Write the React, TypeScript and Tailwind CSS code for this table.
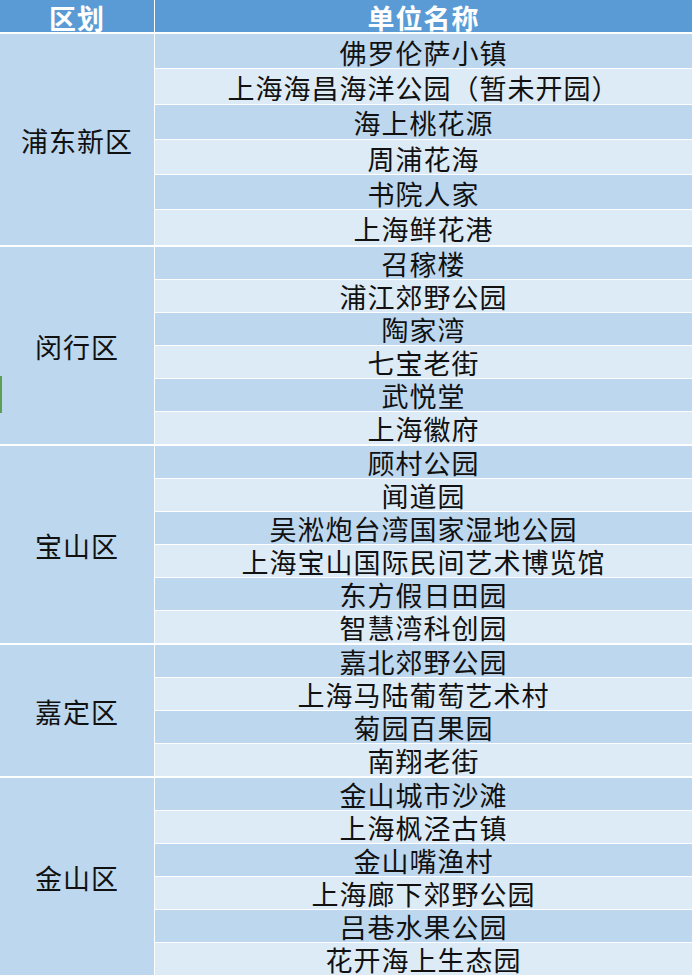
import React from "react";

const groups: { name: string; rowH: string; items: string[] }[] = [
  {
    name: "浦东新区",
    rowH: "h-[34.3px]",
    items: ["佛罗伦萨小镇", "上海海昌海洋公园（暂未开园）", "海上桃花源", "周浦花海", "书院人家", "上海鲜花港"],
  },
  {
    name: "闵行区",
    rowH: "h-[32px]",
    items: ["召稼楼", "浦江郊野公园", "陶家湾", "七宝老街", "武悦堂", "上海徽府"],
  },
  {
    name: "宝山区",
    rowH: "h-[32px]",
    items: ["顾村公园", "闻道园", "吴淞炮台湾国家湿地公园", "上海宝山国际民间艺术博览馆", "东方假日田园", "智慧湾科创园"],
  },
  {
    name: "嘉定区",
    rowH: "h-[32px]",
    items: ["嘉北郊野公园", "上海马陆葡萄艺术村", "菊园百果园", "南翔老街"],
  },
  {
    name: "金山区",
    rowH: "h-[32px]",
    items: ["金山城市沙滩", "上海枫泾古镇", "金山嘴渔村", "上海廊下郊野公园", "吕巷水果公园", "花开海上生态园"],
  },
];

export default function App() {
  return (
    <div
      className="relative w-[693px] h-[975px] bg-white overflow-hidden"
      style={{ fontFamily: '"Noto Sans CJK SC", "Noto Sans", sans-serif' }}
    >
      <div className="w-[692px] flex flex-col gap-[2px] bg-white">
        <div className="flex gap-px h-[32px] bg-white">
          <div className="w-[154px] bg-[#5b9bd5] flex items-center justify-center pt-[2px] text-white font-bold text-[27px] leading-none tracking-[1px]">
            区划
          </div>
          <div className="flex-1 bg-[#5b9bd5] flex items-center justify-center pt-[2px] text-white font-bold text-[27px] leading-none tracking-[1px]">
            单位名称
          </div>
        </div>
        {groups.map((g) => (
          <div key={g.name} className="flex gap-px bg-white">
            <div className="w-[154px] bg-[#bdd7ee] flex items-center justify-center pt-[2px] text-[27px] leading-none text-[#111] tracking-[1px]">
              {g.name}
            </div>
            <div className="flex-1 flex flex-col gap-px">
              {g.items.map((it, i) => (
                <div
                  key={it}
                  className={`${g.rowH} flex items-center justify-center pt-[2px] text-[27px] leading-none text-[#111] tracking-[1px] ${
                    i % 2 === 0 ? "bg-[#bdd7ee]" : "bg-[#ddebf7]"
                  }`}
                >
                  {it}
                </div>
              ))}
            </div>
          </div>
        ))}
      </div>
      <div className="absolute left-0 top-[376px] w-[2px] h-[37px] bg-[#5e9e54]" />
    </div>
  );
}
